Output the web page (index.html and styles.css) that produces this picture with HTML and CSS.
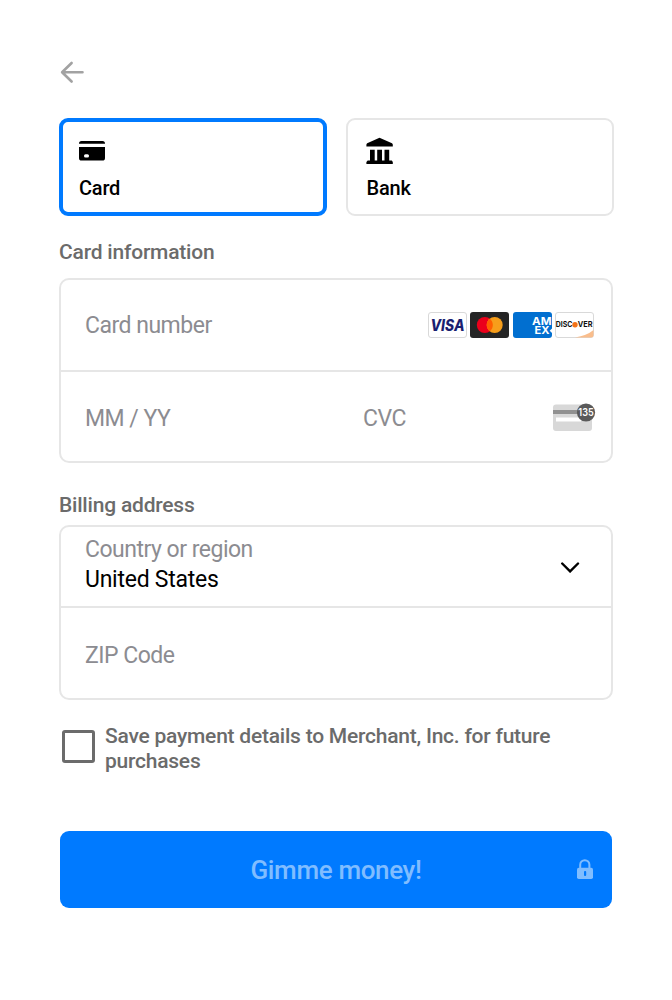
FILE: index.html
```html
<!DOCTYPE html>
<html lang="en">
<head>
<meta charset="utf-8">
<title>Payment</title>
<link rel="stylesheet" href="styles.css">
</head>
<body>
<main class="sheet">
  <a class="back" aria-label="Back"><svg width="26" height="24" viewBox="0 0 26 24"><path d="M12.600 3 3.100 12.200 12.600 21.500M3.400 12.200H23.500" fill="none" stroke="#a2a2a2" stroke-width="2.600" stroke-linecap="round" stroke-linejoin="round"/></svg></a>
  <div class="methods">
    <div class="method selected">
      <svg width="28" height="28" viewBox="0 0 28 28"><path d="M1 6.700V6.400a2.500 2.500 0 0 1 2.500-2.500h21A2.500 2.500 0 0 1 27 6.400v.3zM1 10.100h26v10.800a2.600 2.600 0 0 1-2.600 2.600H3.600A2.600 2.600 0 0 1 1 20.900z"/><rect x="6" y="17.200" width="5" height="3.200" rx="1.500" fill="#fff"/></svg>
      <span>Card</span>
    </div>
    <div class="method">
      <svg width="28" height="28" viewBox="0 0 28 28"><path d="M14.500.7 27 6.200Q27.800 6.700 27.800 7.800V9.500H1.400V7.800Q1.400 6.700 2.200 6.200zM5 12.800h4.700v11H5zM12.200 12.800H17v11h-4.800zM19.500 12.800h4.700v11h-4.700zM2.700 23.400h24.100l1 1.500v2H1.400v-2z"/></svg>
      <span class="bank-label">Bank</span>
    </div>
  </div>
  <h2 class="heading card-heading">Card information</h2>
  <div class="group">
    <div class="row number-row">
      <span class="placeholder">Card number</span>
      <div class="brands">
        <svg class="brand" viewBox="0 0 39 26"><rect x=".5" y=".5" width="38" height="25" rx="2.500" fill="#fff" stroke="#d9d9d9"/><text x="2.500" y="18.900" class="visa" textLength="34" lengthAdjust="spacingAndGlyphs">VISA</text></svg>
        <svg class="brand" viewBox="0 0 39 26"><rect width="39" height="26" rx="3" fill="#252525"/><circle cx="14.800" cy="13" r="8" fill="#eb001b"/><circle cx="24.700" cy="13" r="8" fill="#f79e1b"/><path d="M19.750 6.700a8 8 0 0 1 0 12.600a8 8 0 0 1 0-12.600" fill="#ff5f00"/></svg>
        <svg class="brand" viewBox="0 0 39 26"><rect width="39" height="26" rx="3" fill="#016fd0"/><text x="19" y="13.200" class="amex" textLength="19.500" lengthAdjust="spacingAndGlyphs">AM</text><text x="21.500" y="22.200" class="amex" textLength="15" lengthAdjust="spacingAndGlyphs">EX</text><path d="m39 16.500-2.300 2.200 2.300 2.300z" fill="#fff"/></svg>
        <svg class="brand" viewBox="0 0 39 26"><rect x=".5" y=".5" width="38" height="25" rx="2.500" fill="#fff" stroke="#d9d9d9"/><path d="M20 25.500Q32 23.500 38.500 18v5a2.500 2.500 0 0 1-2.500 2.500z" fill="#f9bd8c"/><text x=".8" y="15.400" class="discover" textLength="16.600" lengthAdjust="spacingAndGlyphs">DISC</text><circle cx="20" cy="12.700" r="2.700" fill="#f47216"/><text x="22.700" y="15.400" class="discover" textLength="14.800" lengthAdjust="spacingAndGlyphs">VER</text></svg>
      </div>
    </div>
    <div class="row split-row">
      <span class="placeholder expiry">MM / YY</span>
      <span class="placeholder">CVC</span>
      <svg class="cvc-icon" width="43" height="28" viewBox="0 0 43 28"><rect y="1.500" width="39" height="26.500" rx="3" fill="#d8d8d8"/><path d="M0 7h28v4H0z" fill="#919191"/><path d="M3 14.500h25v4H3z" fill="#fff"/><circle cx="33" cy="9.500" r="9.100" fill="#5a5a5a"/><text x="25.300" y="13.300" class="cvc-digits" textLength="15.400" lengthAdjust="spacingAndGlyphs">135</text></svg>
    </div>
  </div>
  <h2 class="heading billing-heading">Billing address</h2>
  <div class="group">
    <div class="row country-row">
      <div class="country"><span class="label">Country or region</span><span class="value">United States</span></div>
      <svg width="20" height="12" viewBox="0 0 20 12"><path d="m2.200 2.500 7.900 7.900L18 2.500" fill="none" stroke="#000" stroke-width="2.400" stroke-linecap="round"/></svg>
    </div>
    <div class="row zip-row"><span class="placeholder zip">ZIP Code</span></div>
  </div>
  <label class="save"><span class="checkbox"></span><span>Save payment details to Merchant, Inc. for future<br>purchases</span></label>
  <button class="pay"><span class="pay-label">Gimme money!</span><svg width="18" height="21" viewBox="0 0 18 21"><path d="M4.200 10V5.800a4.600 4.600 0 0 1 9.200 0V10" fill="none" stroke="#80bdff" stroke-width="2"/><rect x="1" y="8.800" width="16" height="11.200" rx="1.800" fill="#80bdff"/><rect x="8" y="12" width="2.200" height="5" rx=".9" fill="#007aff"/></svg></button>
</main>
</body>
</html>
```
FILE: styles.css
```css
* { box-sizing: border-box; }
body { margin: 0; background: #fff; font-family: Roboto, sans-serif; }
svg { display: block; flex: none; }
.sheet { width: 555px; margin-left: 59px; padding-top: 60px; }
.back { display: block; height: 58px; }
.methods { display: flex; gap: 19px; height: 98px; }
.method { flex: 1; padding: 17px 18px; border: 2px solid #e6e6e6; border-radius: 9px; font-size: 20px; line-height: 24px; letter-spacing: -.2px; font-weight: 500; color: #000; }
.method svg { margin-bottom: 12px; margin-left: -1px; }
.method span { display: block; margin-top: -1px; }
.method .bank-label { padding-left: .5px; }
.method.selected { border: 4px solid #007aff; padding: 15px 16px; }
.heading { margin: 0; font-size: 21px; line-height: 26px; letter-spacing: -.2px; font-weight: 500; color: #6b6b6b; }
.card-heading { margin-top: 23px; margin-bottom: 13px; }
.billing-heading { margin-top: 29px; margin-bottom: 7px; }
.group { width: 554px; border: 2px solid #e6e6e6; border-radius: 10px; }
.row { display: flex; align-items: center; padding-left: 24px; }
.row + .row { border-top: 2px solid #e6e6e6; }
.placeholder, .label { font-size: 23px; line-height: 30px; letter-spacing: -.5px; color: #8c8c91; }
.placeholder { padding-top: 2px; }
.number-row { height: 90px; padding-right: 17px; justify-content: space-between; }
.brands { display: flex; gap: 3.300px; }
.brand { width: 39px; height: 26px; overflow: visible; }
.visa { font: italic 800 15.500px Inter, sans-serif; fill: #1a1f71; }
.amex { font: 700 10.800px Inter, sans-serif; fill: #fff; }
.discover { font: 700 7.500px Inter, sans-serif; fill: #111; }
.split-row { height: 91px; padding-right: 15px; }
.split-row .placeholder { padding-top: 5px; }
.expiry { width: 278px; }
.cvc-icon { margin-left: auto; overflow: visible; }
.cvc-digits { font: 600 10.500px Inter, sans-serif; fill: #fff; }
.country-row { height: 79px; padding-right: 31px; justify-content: space-between; }
.country { display: flex; flex-direction: column; padding-bottom: 4px; }
.value { font-size: 23px; line-height: 30px; letter-spacing: -.25px; color: #000; }
.zip-row { height: 92px; }
.zip-row .placeholder { padding-top: 5px; }
.save { display: flex; align-items: center; gap: 10px; margin: 24px 0 0 3px; font-size: 21px; line-height: 25px; letter-spacing: -.23px; font-weight: 500; color: #6b6b6b; white-space: nowrap; }
.checkbox { flex: none; width: 33px; height: 33px; margin-bottom: 5px; border: 3px solid #6b6b6b; border-radius: 3px; }
.pay { display: flex; align-items: center; width: 552px; height: 77px; margin: 57px 0 0 1px; padding: 0 18px 0 36px; border: 0; border-radius: 9px; background: #007aff; color: #80bdff; font: 500 26px Roboto, sans-serif; letter-spacing: -.35px; }
.pay-label { flex: 1; text-align: center; }
```
